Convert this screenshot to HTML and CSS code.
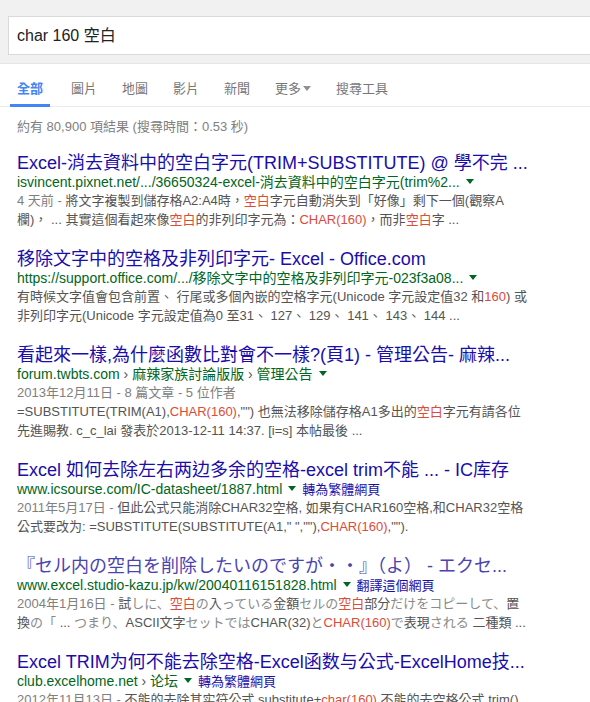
FILE: index.html
```html
<!DOCTYPE html>
<html lang="zh-TW">
<head>
    <meta charset="UTF-8">
    <title>char 160 空白 - Google 搜尋</title>
    <link rel="stylesheet" href="styles.css">
</head>
<body>
    <!-- 搜尋框 -->
    <div class="header">
        <div class="searchbox">char 160 空白</div>
    </div>

    <!-- 分頁 -->
    <div class="tabs">
        <div class="tab active">全部</div>
        <div class="tab">圖片</div>
        <div class="tab">地圖</div>
        <div class="tab">影片</div>
        <div class="tab">新聞</div>
        <div class="tab">更多<span class="caret"></span></div>
        <div class="tab">搜尋工具</div>
    </div>

    <div class="stats">約有 80,900 項結果 (搜尋時間：0.53 秒)</div>

    <!-- 搜尋結果 -->
    <div class="results">
        <div class="result">
            <div class="title">Excel-消去資料中的空白字元(TRIM+SUBSTITUTE) @ 學不完 ...</div>
            <div class="url">isvincent.pixnet.net/.../36650324-excel-消去資料中的空白字元(trim%2...<span class="arrow"></span></div>
            <div class="snippet"><span class="date">4 天前 - </span>將文字複製到儲存格A2:A4時，<em>空白</em>字元自動消失到「好像」剩下一個(觀察A<br>欄)， ... 其實這個看起來像<em>空白</em>的非列印字元為：<em>CHAR(160)</em>，而非<em>空白</em>字 ...</div>
        </div>

        <div class="result">
            <div class="title">移除文字中的空格及非列印字元- Excel - Office.com</div>
            <div class="url">https://support.office.com/.../移除文字中的空格及非列印字元-023f3a08...<span class="arrow"></span></div>
            <div class="snippet">有時候文字值會包含前置、 行尾或多個內嵌的空格字元(Unicode 字元設定值32 和<em>160</em>) 或<br>非列印字元(Unicode 字元設定值為0 至31、 127、 129、 141、 143、 144 ...</div>
        </div>

        <div class="result">
            <div class="title">看起來一樣,為什麼函數比對會不一樣?(頁1) - 管理公告- 麻辣...</div>
            <div class="url">forum.twbts.com <span class="sep">›</span> 麻辣家族討論版版 <span class="sep">›</span> 管理公告<span class="arrow"></span></div>
            <div class="snippet"><span class="date">2013年12月11日 - 8 篇文章 - 5 位作者</span><br>=SUBSTITUTE(TRIM(A1),<em>CHAR(160)</em>,"") 也無法移除儲存格A1多出的<em>空白</em>字元有請各位<br>先進賜教. c_c_lai 發表於2013-12-11 14:37. [i=s] 本帖最後 ...</div>
        </div>

        <div class="result">
            <div class="title">Excel 如何去除左右两边多余的空格-excel trim不能 ... - IC库存</div>
            <div class="url">www.icsourse.com/IC-datasheet/1887.html<span class="arrow"></span><span class="translate">轉為繁體網頁</span></div>
            <div class="snippet"><span class="date">2011年5月17日 - </span>但此公式只能消除CHAR32空格, 如果有CHAR160空格,和CHAR32空格<br>公式要改为: =SUBSTITUTE(SUBSTITUTE(A1," ",""),<em>CHAR(160)</em>,"").</div>
        </div>

        <div class="result" lang="ja">
            <div class="title light">『セル内の空白を削除したいのですが・・』（よ） - エクセ...</div>
            <div class="url">www.excel.studio-kazu.jp/kw/20040116151828.html<span class="arrow"></span><span class="translate">翻譯這個網頁</span></div>
            <div class="snippet"><span class="date">2004年1月16日 - </span>試<span class="kana">しに、</span><em>空白</em><span class="kana">の</span>入<span class="kana">っている</span>金額<span class="kana">セルの</span><em>空白</em>部分<span class="kana">だけをコピーして、</span>置<br>換<span class="kana">の「</span> ... <span class="kana">つまり、</span>ASCII文字<span class="kana">セットでは</span>CHAR(32)<span class="kana">と</span><em>CHAR(160)</em><span class="kana">で</span>表現<span class="kana">される</span> 二種類 ...</div>
        </div>

        <div class="result">
            <div class="title">Excel TRIM为何不能去除空格-Excel函数与公式-ExcelHome技...</div>
            <div class="url">club.excelhome.net <span class="sep">›</span> 论坛<span class="arrow"></span><span class="translate">轉為繁體網頁</span></div>
            <div class="snippet"><span class="date">2012年11月13日 - </span>不能的去除其实符公式 substitute+<em>char(160)</em> 不能的去空格公式 trim() ...</div>
        </div>
    </div>
</body>
</html>
```

FILE: styles.css
```css
html, body {
    overflow: hidden;
}

body {
    margin: 0;
    font-family: Arial, "Liberation Sans", "Noto Sans CJK TC", sans-serif;
    background: #fff;
    color: #222;
}

.result[lang="ja"] {
    font-family: Arial, "Liberation Sans", "Noto Sans CJK JP", sans-serif;
}

.header {
    height: 64px;
    background: #f1f1f1;
    border-bottom: 1px solid #e5e5e5;
    padding: 16px 0 0 8px;
    box-sizing: border-box;
}

/* 右邊延伸到視窗外，不畫右框 */
.searchbox {
    height: 39px;
    line-height: 37px;
    border: 1px solid #d9d9d9;
    border-right: none;
    background: #fff;
    padding-left: 8px;
    box-sizing: border-box;
    font-size: 16px;
    color: #222;
}

.tabs {
    display: flex;
    height: 43px;
    padding: 15px 0 0 10px;
    box-sizing: border-box;
    border-bottom: 1px solid #ebebeb;
}

.tab {
    padding: 0 7px;
    margin-right: 11px;
    height: 28px;
    line-height: 19px;
    font-size: 13px;
    color: #777;
    box-sizing: border-box;
}

.tab.active {
    color: #4285f4;
    font-weight: bold;
    border-bottom: 3px solid #4285f4;
    margin-right: 14px;
}

.caret {
    display: inline-block;
    margin-left: 2px;
    vertical-align: 2px;
    border-left: 4px solid transparent;
    border-right: 4px solid transparent;
    border-top: 5px solid #909090;
}

.stats {
    margin: 10px 0 0 17px;
    font-size: 13px;
    line-height: 19px;
    color: #808080;
}

.results {
    padding: 16px 0 0 17px;
}

.result {
    margin-bottom: 19px;
    white-space: nowrap;
}

.title {
    font-size: 18px;
    line-height: 22px;
    color: #1a0dab;
}

.title.light {
    color: #4a43b0;
}

.url {
    font-size: 14px;
    line-height: 17px;
    color: #006621;
}

.sep {
    color: #545454;
}

.arrow {
    display: inline-block;
    margin-left: 6px;
    vertical-align: 3px;
    border-left: 4px solid transparent;
    border-right: 4px solid transparent;
    border-top: 5px solid #006621;
}

.translate {
    margin-left: 6px;
    font-size: 13px;
    color: #1a0dab;
}

.snippet {
    font-size: 13px;
    line-height: 19px;
    color: #545454;
}

.snippet em {
    font-style: normal;
    color: #dd4b39;
}

.date {
    color: #808080;
}

.kana {
    color: #8a8a8a;
}
```
